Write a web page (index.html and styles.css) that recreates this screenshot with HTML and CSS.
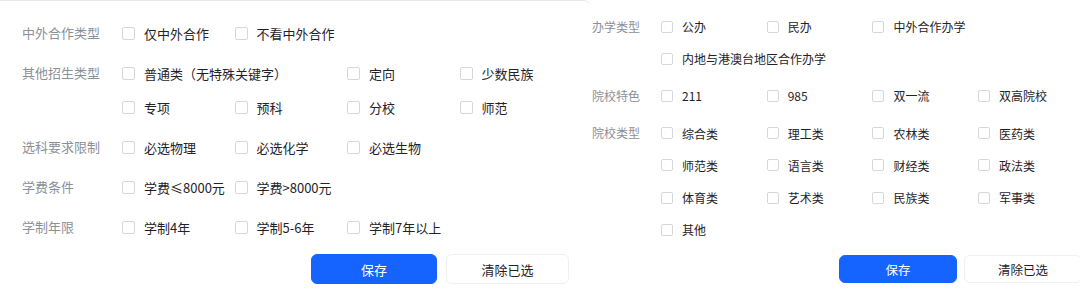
FILE: index.html
```html
<!DOCTYPE html>
<html lang="zh-CN">
<head>
<meta charset="utf-8">
<title>筛选</title>
<link rel="stylesheet" href="styles.css">
</head>
<body>
<div class="page">
  <section class="panel panel-left">
    <div class="group">
      <div class="label">中外合作类型</div>
      <div class="opts">
        <label class="opt"><span class="box"></span><span>仅中外合作</span></label>
        <label class="opt"><span class="box"></span><span>不看中外合作</span></label>
      </div>
    </div>
    <div class="group">
      <div class="label">其他招生类型</div>
      <div class="opts">
        <label class="opt"><span class="box"></span><span>普通类（无特殊关键字）</span></label>
        <label class="opt col3"><span class="box"></span><span>定向</span></label>
        <label class="opt"><span class="box"></span><span>少数民族</span></label>
        <label class="opt"><span class="box"></span><span>专项</span></label>
        <label class="opt"><span class="box"></span><span>预科</span></label>
        <label class="opt"><span class="box"></span><span>分校</span></label>
        <label class="opt"><span class="box"></span><span>师范</span></label>
      </div>
    </div>
    <div class="group">
      <div class="label">选科要求限制</div>
      <div class="opts">
        <label class="opt"><span class="box"></span><span>必选物理</span></label>
        <label class="opt"><span class="box"></span><span>必选化学</span></label>
        <label class="opt"><span class="box"></span><span>必选生物</span></label>
      </div>
    </div>
    <div class="group">
      <div class="label">学费条件</div>
      <div class="opts">
        <label class="opt"><span class="box"></span><span>学费≤8000元</span></label>
        <label class="opt"><span class="box"></span><span>学费&gt;8000元</span></label>
      </div>
    </div>
    <div class="group">
      <div class="label">学制年限</div>
      <div class="opts">
        <label class="opt"><span class="box"></span><span>学制4年</span></label>
        <label class="opt"><span class="box"></span><span>学制5-6年</span></label>
        <label class="opt"><span class="box"></span><span>学制7年以上</span></label>
      </div>
    </div>
    <div class="actions">
      <button class="btn btn-primary" type="button">保存</button>
      <button class="btn btn-default" type="button">清除已选</button>
    </div>
  </section>

  <section class="panel panel-right">
    <div class="group">
      <div class="label">办学类型</div>
      <div class="opts">
        <label class="opt"><span class="box"></span><span>公办</span></label>
        <label class="opt"><span class="box"></span><span>民办</span></label>
        <label class="opt"><span class="box"></span><span>中外合作办学</span></label>
        <label class="opt wide"><span class="box"></span><span>内地与港澳台地区合作办学</span></label>
      </div>
    </div>
    <div class="group">
      <div class="label">院校特色</div>
      <div class="opts">
        <label class="opt"><span class="box"></span><span>211</span></label>
        <label class="opt"><span class="box"></span><span>985</span></label>
        <label class="opt"><span class="box"></span><span>双一流</span></label>
        <label class="opt"><span class="box"></span><span>双高院校</span></label>
      </div>
    </div>
    <div class="group">
      <div class="label">院校类型</div>
      <div class="opts">
        <label class="opt"><span class="box"></span><span>综合类</span></label>
        <label class="opt"><span class="box"></span><span>理工类</span></label>
        <label class="opt"><span class="box"></span><span>农林类</span></label>
        <label class="opt"><span class="box"></span><span>医药类</span></label>
        <label class="opt"><span class="box"></span><span>师范类</span></label>
        <label class="opt"><span class="box"></span><span>语言类</span></label>
        <label class="opt"><span class="box"></span><span>财经类</span></label>
        <label class="opt"><span class="box"></span><span>政法类</span></label>
        <label class="opt"><span class="box"></span><span>体育类</span></label>
        <label class="opt"><span class="box"></span><span>艺术类</span></label>
        <label class="opt"><span class="box"></span><span>民族类</span></label>
        <label class="opt"><span class="box"></span><span>军事类</span></label>
        <label class="opt"><span class="box"></span><span>其他</span></label>
      </div>
    </div>
    <div class="actions">
      <button class="btn btn-primary" type="button">保存</button>
      <button class="btn btn-default" type="button">清除已选</button>
    </div>
  </section>
</div>
</body>
</html>
```

FILE: styles.css
```css
html, body {
  margin: 0;
  padding: 0;
  background: #ffffff;
  overflow: hidden;
}

body {
  width: 1080px;
  height: 303px;
  font-family: "Noto Sans CJK SC", "Noto Sans", sans-serif;
  color: #1f2329;
}

.page {
  display: flex;
  align-items: flex-start;
  width: 1080px;
  height: 303px;
  overflow: hidden;
}

.panel {
  flex: none;
  box-sizing: border-box;
}

.group {
  display: flex;
  align-items: flex-start;
}

.label {
  flex: none;
  white-space: nowrap;
  color: #8a9099;
}

.opts {
  display: grid;
}

.opt {
  display: flex;
  align-items: center;
  white-space: nowrap;
  cursor: pointer;
  color: #1f2329;
}

.box {
  flex: none;
  box-sizing: border-box;
  border: 1px solid #d4d7dc;
  border-radius: 2px;
  background: #fff;
}

.actions {
  display: flex;
  justify-content: flex-end;
}

.btn {
  font-family: inherit;
  box-sizing: border-box;
  border-radius: 6px;
  cursor: pointer;
  padding: 0;
}

.btn-primary {
  background: #1664ff;
  border: 1px solid #1664ff;
  color: #ffffff;
}

.btn-default {
  background: #ffffff;
  border: 1px solid #eef0f2;
  color: #1f2329;
}

/* Left panel */
.panel-left {
  width: 590px;
  padding: 15px 21px 0 22px;
  border-top: 1px solid #e8e9ec;
  border-top-right-radius: 6px;
  font-size: 13px;
}

.panel-left .group {
  margin-bottom: 6px;
}

.panel-left .label {
  width: 100px;
  line-height: 34px;
}

.panel-left .opts {
  grid-template-columns: repeat(4, 112.5px);
  grid-auto-rows: 34px;
}

.panel-left .opt {
  gap: 9px;
}

.panel-left .box {
  width: 13px;
  height: 13px;
}

.panel-left .col3 {
  grid-column: 3;
}

.panel-left .actions {
  margin-top: 10px;
  gap: 9px;
}

.panel-left .btn {
  height: 30px;
  font-size: 13px;
}

.panel-left .btn-primary {
  width: 126px;
}

.panel-left .btn-default {
  width: 123px;
}

/* Right panel */
.panel-right {
  width: 513px;
  padding: 10.5px 21px 0 2px;
  font-size: 12px;
}

.panel-right .group {
  margin-bottom: 5px;
}

.panel-right .label {
  width: 69px;
  line-height: 32.2px;
}

.panel-right .opts {
  grid-template-columns: repeat(4, 105.7px);
  grid-auto-rows: 32.2px;
}

.panel-right .opt {
  gap: 9px;
}

.panel-right .wide {
  grid-column: 1 / span 4;
}

.panel-right .box {
  width: 12px;
  height: 12px;
}

.panel-right .actions {
  margin-top: 9.6px;
  gap: 7px;
}

.panel-right .btn {
  height: 28px;
  width: 118px;
  font-size: 12.5px;
}
```
